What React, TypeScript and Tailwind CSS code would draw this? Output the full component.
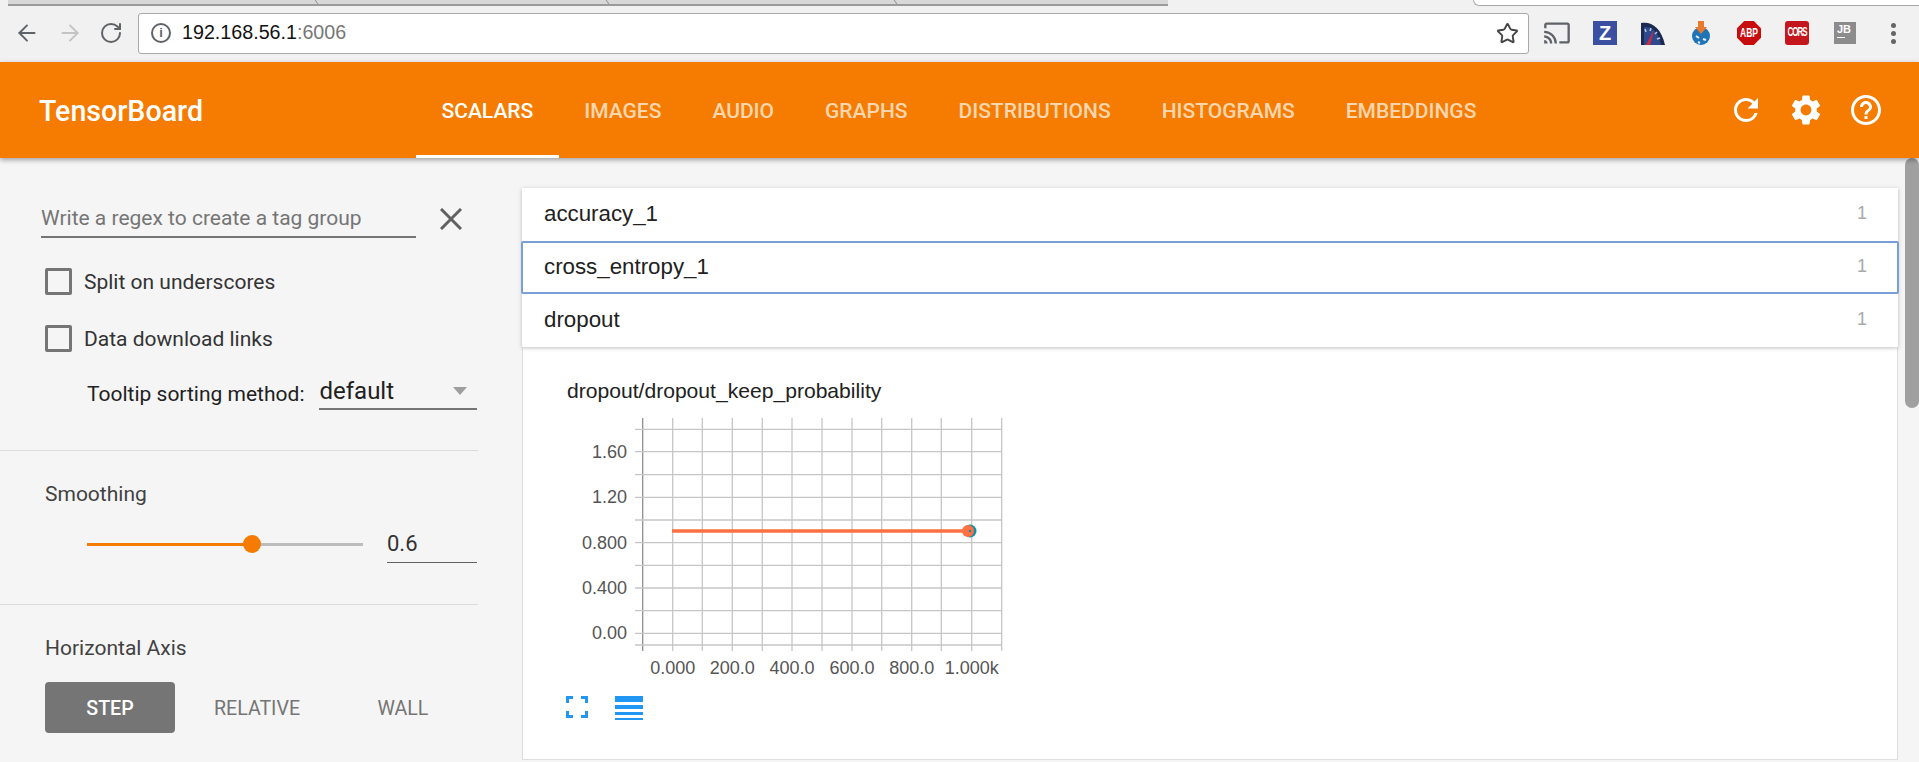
import { ArrowLeft, ArrowRight, RotateCw, Star } from 'lucide-react';
import { MdCast, MdHelpOutline, MdRefresh, MdSettings } from 'react-icons/md';

const NAV_TABS = ['SCALARS', 'IMAGES', 'AUDIO', 'GRAPHS', 'DISTRIBUTIONS', 'HISTOGRAMS', 'EMBEDDINGS'];

const GRID_X = [642.7, 672.7, 702.3, 732.3, 762.3, 792, 822, 852, 881.7, 911.7, 941.3, 971.7, 1001.7];
const GRID_Y = [428.3, 450.7, 473.7, 496.3, 519, 541.7, 564.3, 587, 609.7, 632.3, 644];
const Y_LABELS = [
  { y: 450.7, label: '1.60' },
  { y: 496.3, label: '1.20' },
  { y: 541.7, label: '0.800' },
  { y: 587, label: '0.400' },
  { y: 632.3, label: '0.00' },
];
const X_LABELS = [
  { x: 672.7, label: '0.000' },
  { x: 732.3, label: '200.0' },
  { x: 792, label: '400.0' },
  { x: 852, label: '600.0' },
  { x: 911.7, label: '800.0' },
  { x: 971.7, label: '1.000k' },
];

const TabEdge = () => <div className="h-full w-[1px] skew-x-[35deg] bg-[#8f8f8f]" />;

const BrowserTabs = () => (
  <div className="flex h-[6px] bg-[#f1f1f1]">
    <div className="ml-[8px] flex h-full w-[1160px] border-b-2 border-[#9a9a9a] bg-[#d8d8d8]">
      <div className="w-[308px]" />
      <TabEdge />
      <div className="w-[290px]" />
      <TabEdge />
      <div className="w-[287px]" />
      <TabEdge />
    </div>
    <div className="ml-[305px] flex-1 rounded-bl-md border-b border-l border-[#a8a8a8] bg-white" />
  </div>
);

const ExtensionIcons = () => (
  <div className="ml-[4px] flex items-center">
    <div className="flex w-[48px] justify-center">
      <MdCast className="h-[28px] w-[28px] text-[#5f6368]" />
    </div>
    <div className="flex w-[48px] justify-center">
      <div className="flex h-[24px] w-[24px] items-center justify-center bg-[#3b4fa0] font-['Liberation_Sans',sans-serif] text-[20px] font-bold text-white">
        Z
      </div>
    </div>
    <div className="flex w-[48px] justify-center">
      <svg viewBox="0 0 24 24" className="h-[24px] w-[24px]">
        <path d="M0 24V2C10 0 20 6 24 24Z" fill="#1c2a52" />
        <path d="M3 24V6C10 5 17 10 20 24Z" fill="#2f4a8c" />
        <path d="M5 24L13 9L9 24Z" fill="#d9263b" />
        <path d="M4 8l1 3M10 7l-1 3M16 11l-2 2M19 17l-3 1" stroke="#b8c8e8" strokeWidth="1.5" />
      </svg>
    </div>
    <div className="flex w-[48px] justify-center">
      <svg viewBox="0 0 24 24" className="h-[24px] w-[24px]">
        <circle cx="12" cy="15" r="9" fill="#1f73b7" />
        <path d="M9 0h6v6h3l-6 7-6-7h3Z" fill="#e8792f" />
        <path d="M7 15l3 2M14 18l3 1M9 21l2 1" stroke="#e6f0fa" strokeWidth="2" />
      </svg>
    </div>
    <div className="flex w-[48px] justify-center">
      <div className="flex h-[24px] w-[24px] items-center justify-center bg-[#c70d0d] [clip-path:polygon(30%_0,70%_0,100%_30%,100%_70%,70%_100%,30%_100%,0_70%,0_30%)] font-['Liberation_Sans',sans-serif] text-[8.5px] font-bold text-white">
        <span className="scale-y-[1.4]">ABP</span>
      </div>
    </div>
    <div className="flex w-[48px] justify-center">
      <div className="flex h-[24px] w-[24px] items-center justify-center rounded-[3px] bg-[#c3171d] font-['Liberation_Sans',sans-serif] text-[8px] font-bold tracking-[-1px] text-white">
        <span className="scale-y-[1.6]">CORS</span>
      </div>
    </div>
    <div className="flex w-[48px] justify-center">
      <div className="flex h-[22px] w-[22px] flex-col bg-[#8c8c8c] pl-[3px] font-['Liberation_Sans',sans-serif] text-[11px] font-bold leading-[14px] text-white">
        JB
        <div className="mt-[1px] h-[1px] w-[8px] bg-white" />
      </div>
    </div>
    <div className="flex w-[48px] flex-col items-center gap-[3px]">
      <div className="h-[5px] w-[5px] rounded-full bg-[#666]" />
      <div className="h-[5px] w-[5px] rounded-full bg-[#666]" />
      <div className="h-[5px] w-[5px] rounded-full bg-[#666]" />
    </div>
  </div>
);

const BrowserToolbar = () => (
  <div className="flex h-[56px] items-center bg-[#f1f1f1] pb-[2px]">
    <ArrowLeft className="ml-[14px] h-[26px] w-[26px] text-[#5f6368]" strokeWidth={1.8} />
    <ArrowRight className="ml-[17px] h-[26px] w-[26px] text-[#c4c4c4]" strokeWidth={1.8} />
    <RotateCw className="ml-[16px] h-[24px] w-[24px] text-[#5f6368]" strokeWidth={2} />
    <div className="ml-[15px] flex h-[41px] w-[1391px] items-center rounded-[3px] border border-[#a9a9a9] bg-white">
      <div className="ml-[12px] flex h-[20px] w-[20px] items-center justify-center rounded-full border-2 border-[#5f6368] font-['Liberation_Sans',sans-serif] text-[13px] font-bold text-[#5f6368]">
        i
      </div>
      <span className="ml-[11px] font-['Liberation_Sans',sans-serif] text-[19.7px] text-[#111]">
        192.168.56.1<span className="text-[#777]">:6006</span>
      </span>
      <Star className="ml-auto mr-[9px] h-[23px] w-[23px] text-[#444]" strokeWidth={2} />
    </div>
    <ExtensionIcons />
  </div>
);

const AppHeader = () => (
  <header className="relative z-10 flex h-[96px] items-stretch bg-[#f57c00] font-['Roboto',sans-serif] text-white shadow-[0_2px_5px_rgba(0,0,0,0.35)]">
    <div className="flex w-[416px] items-center pl-[39px] pt-[2px] text-[28.6px] font-medium">TensorBoard</div>
    <nav className="flex">
      {NAV_TABS.map((tab, i) => (
        <div
          key={tab}
          className={
            i === 0
              ? 'flex items-center border-b-[3px] border-white px-[25.5px] pt-[6px] text-[21px] font-medium text-white'
              : 'flex items-center border-b-[3px] border-transparent px-[25.5px] pt-[6px] text-[21px] font-medium text-white/70'
          }
        >
          {tab}
        </div>
      ))}
    </nav>
    <div className="ml-auto flex items-center gap-[24px] pr-[35px]">
      <MdRefresh className="h-[36px] w-[36px]" />
      <MdSettings className="h-[36px] w-[36px]" />
      <MdHelpOutline className="h-[36px] w-[36px]" />
    </div>
  </header>
);

const CheckRow = ({ label, className }: { label: string; className: string }) => (
  <div className={`flex h-[27px] items-center pl-[4px] ${className}`}>
    <div className="h-[27px] w-[27px] rounded-[2px] border-[3px] border-[#757575]" />
    <span className="ml-[12px] pt-[2px] text-[21px] text-[#333]">{label}</span>
  </div>
);

const Sidebar = () => (
  <aside className="w-[522px] shrink-0 font-['Roboto',sans-serif]">
    <section className="h-[293px] w-[478px] border-b border-[#dcdcdc] pl-[41px] pt-[42px]">
      <div className="flex">
        <div className="flex h-[38px] w-[375px] items-center border-b-2 border-[#757575] pt-[1px] text-[21px] text-[#757575]">
          Write a regex to create a tag group
        </div>
        <svg viewBox="0 0 22 22" className="ml-[24px] mt-[8px] h-[22px] w-[22px]">
          <path d="M1 1L21 21M21 1L1 21" stroke="#616161" strokeWidth="3" />
        </svg>
      </div>
      <CheckRow label="Split on underscores" className="mt-[30px]" />
      <CheckRow label="Data download links" className="mt-[30px]" />
      <div className="mt-[22px] flex h-[36px] pl-[46px]">
        <span className="self-end pb-[3px] text-[21px] leading-[26px] text-[#212121]">Tooltip sorting method:</span>
        <div className="ml-[15px] flex h-full w-[158px] items-center border-b-2 border-[#757575] pb-[1px] text-[24px] text-[#212121]">
          default
          <div className="ml-auto mr-[10px] h-0 w-0 border-x-[7px] border-t-[8px] border-x-transparent border-t-[#9e9e9e]" />
        </div>
      </div>
    </section>

    <section className="h-[154px] w-[478px] border-b border-[#dcdcdc] pt-[31px]">
      <div className="pl-[45px] text-[21px] leading-[24px] text-[#424242]">Smoothing</div>
      <div className="mt-[19px] flex h-[38px] items-center pl-[87px]">
        <div className="relative h-[3px] w-[276px] bg-[#bdbdbd]">
          <div className="h-full w-[165px] bg-[#f57c00]" />
          <div className="absolute left-[156px] top-[-8px] h-[18px] w-[18px] rounded-full bg-[#f57c00]" />
        </div>
        <div className="ml-[24px] flex h-full w-[90px] items-center border-b border-[#616161] text-[22px] text-[#333]">
          0.6
        </div>
      </div>
    </section>

    <section className="pt-[31px]">
      <div className="pl-[45px] text-[21px] leading-[24px] text-[#424242]">Horizontal Axis</div>
      <div className="mt-[22px] flex pl-[45px] text-[19.6px] text-[#757575]">
        <div className="flex h-[51px] w-[130px] items-center justify-center rounded-[4px] bg-[#757575] pt-[2px] font-medium text-white">
          STEP
        </div>
        <div className="flex h-[51px] w-[164px] items-center justify-center pt-[2px]">RELATIVE</div>
        <div className="flex h-[51px] w-[128px] items-center justify-center pt-[2px]">WALL</div>
      </div>
    </section>
  </aside>
);

const ScalarChart = () => (
  <svg viewBox="560 410 460 270" className="ml-[37px] mt-[8px] block h-[270px] w-[460px]">
    {GRID_X.map((x, i) => (
      <line key={x} x1={x} x2={x} y1={417} y2={650} stroke={i === 0 ? '#8f8f8f' : '#c6c6c6'} strokeWidth={1.3} />
    ))}
    {GRID_Y.map((y) => (
      <line key={y} x1={635} x2={1002} y1={y} y2={y} stroke="#c6c6c6" strokeWidth={1.3} />
    ))}
    {Y_LABELS.map((t) => (
      <text key={t.label} x={627} y={t.y + 6} textAnchor="end" fontFamily="Liberation Sans" fontSize={18} fill="#555">
        {t.label}
      </text>
    ))}
    {X_LABELS.map((t) => (
      <text key={t.label} x={t.x} y={673} textAnchor="middle" fontFamily="Liberation Sans" fontSize={18} fill="#555">
        {t.label}
      </text>
    ))}
    <circle cx={970} cy={530} r={6.5} fill="#0f8fa8" />
    <line x1={672} x2={966} y1={530} y2={530} stroke="#ff7043" strokeWidth={3.5} />
    <circle cx={968} cy={530} r={6} fill="#ff7043" />
    <circle cx={970} cy={530} r={1.2} fill="#0f8fa8" />
  </svg>
);

const ChartActions = () => (
  <div className="ml-[43px] mt-[15px] flex items-start gap-[27px]">
    <svg viewBox="0 0 22 22" className="h-[22px] w-[22px]" fill="none" stroke="#2196f3" strokeWidth="3">
      <path d="M1.5 7V1.5H7M15 1.5H20.5V7M20.5 15V20.5H15M7 20.5H1.5V15" />
    </svg>
    <div className="flex w-[28px] flex-col">
      <div className="h-[6px] bg-[#2196f3]" />
      <div className="mt-[3px] h-[4px] bg-[#2196f3]" />
      <div className="mt-[3px] h-[3px] bg-[#2196f3]" />
      <div className="mt-[3px] h-[2px] bg-[#2196f3]" />
    </div>
  </div>
);

const TagRow = ({ name, active }: { name: string; active?: boolean }) => (
  <div
    className={
      active
        ? 'relative z-[1] -mx-[1px] flex h-[53px] items-center justify-between rounded-[2px] border-2 border-[#7a9fd6] bg-white pb-[2px] pl-[21px] pr-[30px]'
        : 'flex h-[53px] items-center justify-between bg-white pb-[2px] pl-[22px] pr-[31px]'
    }
  >
    <span className="text-[22.3px] text-[#212121]">{name}</span>
    <span className="text-[18px] text-[#aaa]">1</span>
  </div>
);

const ScalarsPanel = () => (
  <main className="w-[1376px] shrink-0 pt-[30px] font-['Liberation_Sans',sans-serif]">
    <div className="relative z-[2] shadow-[0_1px_4px_rgba(0,0,0,0.25)]">
      <TagRow name="accuracy_1" />
      <TagRow name="cross_entropy_1" active />
      <TagRow name="dropout" />
    </div>
    <div className="h-[413px] border-x border-b border-[#dedede] bg-white pt-[32px]">
      <div className="pl-[44px] text-[21.1px] leading-[24px] text-[#212121]">dropout/dropout_keep_probability</div>
      <ScalarChart />
      <ChartActions />
    </div>
  </main>
);

const App = () => {
  return (
    <div className="h-[762px] w-full overflow-hidden bg-[#f5f5f5]">
      <BrowserTabs />
      <BrowserToolbar />
      <AppHeader />
      <div className="flex">
        <Sidebar />
        <ScalarsPanel />
        <div className="flex-1 pl-[7px]">
          <div className="h-[250px] rounded-[7px] bg-[#a0a0a0]" />
        </div>
      </div>
    </div>
  );
};

export default App;
